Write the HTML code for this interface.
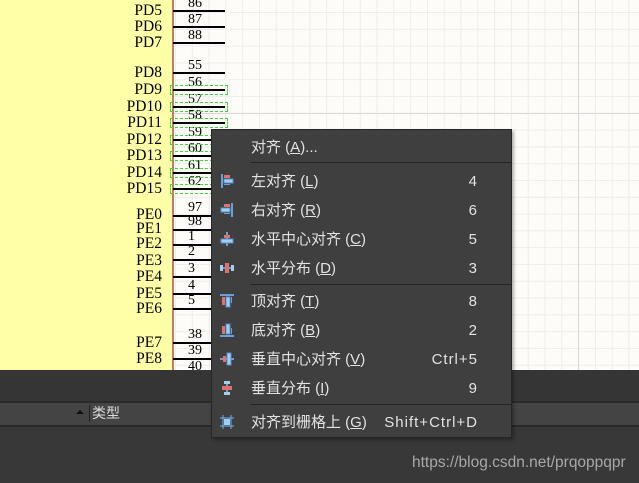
<!DOCTYPE html>
<html><head><meta charset="utf-8"><style>
*{margin:0;padding:0;box-sizing:border-box}
body{width:639px;height:483px;overflow:hidden;position:relative;background:#383838;font-family:"Liberation Sans","Noto Sans CJK SC",sans-serif}
.yel{position:absolute;left:0;top:0;width:173px;height:370px;background:#ffffa8}
.vl{position:absolute;left:172px;top:0;width:2px;height:370px;background:#b77e6a}
.grid{position:absolute;left:174px;top:0;width:465px;height:370px;background-color:#fdfcf8;
background-image:linear-gradient(#d8d8d8,#d8d8d8),linear-gradient(90deg,#d8d8d8,#d8d8d8),linear-gradient(#eeede9 1px,transparent 1px),linear-gradient(90deg,#eeede9 1px,transparent 1px);
background-size:100% 1px,1px 100%,16.8px 16.8px,16.8px 16.8px;background-repeat:no-repeat,no-repeat,repeat,repeat;
background-position:0 113px,404px 0,0 12px,1px 0}
.lb{position:absolute;right:477px;font-family:"Liberation Serif",serif;font-size:15.5px;color:#000;line-height:15px;transform:translateY(-8px)}
.pl{position:absolute;left:173px;width:52px;height:2px;background:#000}
.nm{position:absolute;left:188px;font-family:"Liberation Serif",serif;font-size:14px;line-height:13px;color:#000}
.gb{position:absolute;left:170px;width:58px;height:10px;border:1px dashed #3ed83e}
.b1{position:absolute;left:0;top:370px;width:639px;height:31px;background:#353535}
.b2{position:absolute;left:0;top:401px;width:639px;height:2px;background:#2a2a2a}
.b3{position:absolute;left:0;top:403px;width:639px;height:22px;background:#444}
.b4{position:absolute;left:0;top:425px;width:639px;height:2px;background:#2a2a2a}
.menu{position:absolute;left:211px;top:129px;width:301px;height:309px;background:#3f3f3f;border:1px solid #262626;box-shadow:2px 2px 3px rgba(0,0,0,.3);color:#e2e2e2;font-size:15px}
.it{position:absolute;left:39px;height:20px;line-height:20px;white-space:nowrap;margin-top:2px}
.sc{position:absolute;right:33px;height:20px;line-height:20px;letter-spacing:1px;font-size:15px;margin-top:2px}
.sep{position:absolute;left:39px;right:0;height:1px;background:#252525}
.ic{position:absolute;left:8px;width:14px;height:14px;margin-top:1px}
u{text-decoration:underline}
</style></head><body>
<div class="yel"></div><div class="grid"></div><div class="vl"></div>

<div class="lb" style="top:11px">PD5</div><div class="pl" style="top:10px"></div><div class="nm" style="top:-3px">86</div>
<div class="lb" style="top:27px">PD6</div><div class="pl" style="top:26px"></div><div class="nm" style="top:13px">87</div>
<div class="lb" style="top:43px">PD7</div><div class="pl" style="top:42px"></div><div class="nm" style="top:29px">88</div>
<div class="lb" style="top:73px">PD8</div><div class="pl" style="top:72px"></div><div class="nm" style="top:59px">55</div>
<div class="lb" style="top:90px">PD9</div><div class="pl" style="top:89px"></div><div class="nm" style="top:76px">56</div>
<div class="lb" style="top:107px">PD10</div><div class="pl" style="top:106px"></div><div class="nm" style="top:93px">57</div>
<div class="lb" style="top:123px">PD11</div><div class="pl" style="top:122px"></div><div class="nm" style="top:109px">58</div>
<div class="lb" style="top:140px">PD12</div><div class="pl" style="top:139px"></div><div class="nm" style="top:126px">59</div>
<div class="lb" style="top:156px">PD13</div><div class="pl" style="top:155px"></div><div class="nm" style="top:142px">60</div>
<div class="lb" style="top:173px">PD14</div><div class="pl" style="top:172px"></div><div class="nm" style="top:159px">61</div>
<div class="lb" style="top:189px">PD15</div><div class="pl" style="top:188px"></div><div class="nm" style="top:175px">62</div>
<div class="gb" style="top:85px"></div><div class="gb" style="top:102px"></div><div class="gb" style="top:118px"></div><div class="gb" style="top:135px"></div><div class="gb" style="top:151px"></div><div class="gb" style="top:168px"></div><div class="gb" style="top:184px"></div>

<div class="lb" style="top:215px">PE0</div><div class="pl" style="top:215px"></div><div class="nm" style="top:201px">97</div>
<div class="lb" style="top:229px">PE1</div><div class="pl" style="top:229px"></div><div class="nm" style="top:215px">98</div>
<div class="lb" style="top:244px">PE2</div><div class="pl" style="top:244px"></div><div class="nm" style="top:230px">1</div>
<div class="lb" style="top:261px">PE3</div><div class="pl" style="top:259px"></div><div class="nm" style="top:245px">2</div>
<div class="lb" style="top:277px">PE4</div><div class="pl" style="top:276px"></div><div class="nm" style="top:262px">3</div>
<div class="lb" style="top:294px">PE5</div><div class="pl" style="top:293px"></div><div class="nm" style="top:279px">4</div>
<div class="lb" style="top:309px">PE6</div><div class="pl" style="top:308px"></div><div class="nm" style="top:294px">5</div>
<div class="lb" style="top:343px">PE7</div><div class="pl" style="top:342px"></div><div class="nm" style="top:328px">38</div>
<div class="lb" style="top:359px">PE8</div><div class="pl" style="top:358px"></div><div class="nm" style="top:344px">39</div>
<div class="nm" style="top:360px">40</div>

<div class="b1"></div><div class="b2"></div><div class="b3"></div><div class="b4"></div>
<div style="position:absolute;left:76px;top:410px;width:0;height:0;border-left:4px solid transparent;border-right:4px solid transparent;border-bottom:4px solid #111"></div>
<div style="position:absolute;left:89px;top:405px;width:1px;height:17px;background:#222"></div>
<div style="position:absolute;left:92px;top:404px;color:#ddd;font-size:14px;line-height:18px">类型</div>
<div style="position:absolute;left:412px;top:454px;color:#a8a8a8;font-size:15.5px">https://blog.csdn.net/prqoppqpr</div>

<div class="menu">
<div class="it" style="top:6px">对齐 (<u>A</u>)...</div>
<div class="sep" style="top:32px"></div>
<svg class="ic" style="top:43px" viewBox="0 0 14 14"><rect x="1" y="0" width="2" height="14" fill="#6a9fd8"/><rect x="4" y="1" width="6" height="3" fill="#e36f6f"/><rect x="4" y="5" width="9" height="4" fill="#9fd0f2" stroke="#5a8fc8"/><rect x="4" y="10" width="6" height="1" fill="#6a9fd8"/></svg>
<div class="it" style="top:40px">左对齐 (<u>L</u>)</div><div class="sc" style="top:40px">4</div>
<svg class="ic" style="top:72px" viewBox="0 0 14 14"><rect x="11" y="0" width="2" height="14" fill="#6a9fd8"/><rect x="4" y="1" width="6" height="3" fill="#e36f6f"/><rect x="1" y="5" width="9" height="4" fill="#9fd0f2" stroke="#5a8fc8"/><rect x="4" y="10" width="6" height="1" fill="#6a9fd8"/></svg>
<div class="it" style="top:69px">右对齐 (<u>R</u>)</div><div class="sc" style="top:69px">6</div>
<svg class="ic" style="top:101px" viewBox="0 0 14 14"><rect x="6" y="0" width="2" height="14" fill="#6a9fd8"/><rect x="4" y="3" width="6" height="3" fill="#e36f6f"/><rect x="1" y="7" width="12" height="4" fill="#9fd0f2" stroke="#5a8fc8"/></svg>
<div class="it" style="top:98px">水平中心对齐 (<u>C</u>)</div><div class="sc" style="top:98px">5</div>
<svg class="ic" style="top:130px" viewBox="0 0 14 14"><rect x="0" y="6" width="14" height="2" fill="#6a9fd8"/><rect x="0" y="4" width="3" height="6" fill="#9fd0f2"/><rect x="5" y="2" width="4" height="10" fill="#e36f6f"/><rect x="11" y="4" width="3" height="6" fill="#9fd0f2"/></svg>
<div class="it" style="top:127px">水平分布 (<u>D</u>)</div><div class="sc" style="top:127px">3</div>
<div class="sep" style="top:154px"></div>
<svg class="ic" style="top:163px" viewBox="0 0 14 14"><rect x="0" y="0" width="14" height="2" fill="#6a9fd8"/><rect x="2" y="3" width="3" height="8" fill="#e36f6f"/><rect x="6" y="3" width="4" height="10" fill="#9fd0f2" stroke="#5a8fc8"/><rect x="11" y="3" width="1" height="6" fill="#6a9fd8"/></svg>
<div class="it" style="top:160px">顶对齐 (<u>T</u>)</div><div class="sc" style="top:160px">8</div>
<svg class="ic" style="top:192px" viewBox="0 0 14 14"><rect x="0" y="12" width="14" height="2" fill="#6a9fd8"/><rect x="2" y="3" width="3" height="8" fill="#e36f6f"/><rect x="6" y="1" width="4" height="10" fill="#9fd0f2" stroke="#5a8fc8"/><rect x="11" y="5" width="1" height="6" fill="#6a9fd8"/></svg>
<div class="it" style="top:189px">底对齐 (<u>B</u>)</div><div class="sc" style="top:189px">2</div>
<svg class="ic" style="top:221px" viewBox="0 0 14 14"><rect x="0" y="6" width="14" height="2" fill="#6a9fd8"/><rect x="3" y="4" width="3" height="6" fill="#e36f6f"/><rect x="7" y="1" width="4" height="12" fill="#9fd0f2" stroke="#5a8fc8"/></svg>
<div class="it" style="top:218px">垂直中心对齐 (<u>V</u>)</div><div class="sc" style="top:218px">Ctrl+5</div>
<svg class="ic" style="top:250px" viewBox="0 0 14 14"><rect x="6" y="0" width="2" height="14" fill="#6a9fd8"/><rect x="4" y="0" width="6" height="3" fill="#9fd0f2"/><rect x="2" y="5" width="10" height="4" fill="#e36f6f"/><rect x="4" y="11" width="6" height="3" fill="#9fd0f2"/></svg>
<div class="it" style="top:247px">垂直分布 (<u>I</u>)</div><div class="sc" style="top:247px">9</div>
<div class="sep" style="top:274px"></div>
<svg class="ic" style="top:284px" viewBox="0 0 14 14"><path d="M3 0V14M11 0V14M0 3H14M0 11H14" stroke="#6a9fd8" stroke-width="1.2"/><rect x="4" y="4" width="6" height="6" fill="#9fd0f2"/></svg>
<div class="it" style="top:281px">对齐到栅格上 (<u>G</u>)</div><div class="sc" style="top:281px">Shift+Ctrl+D</div>
</div>
</body></html>
